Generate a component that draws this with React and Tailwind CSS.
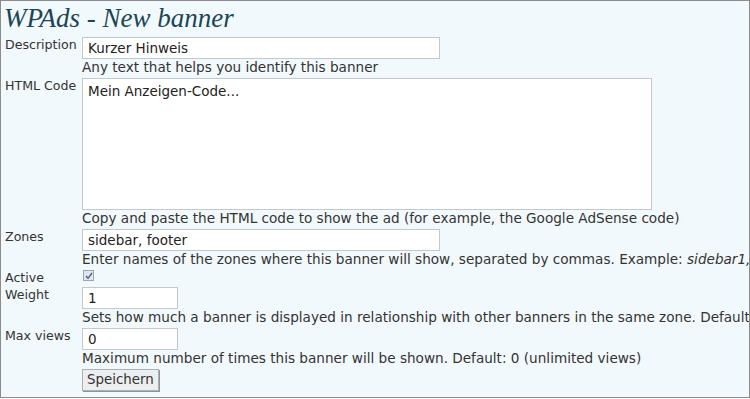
export default function App() {
  const input = 'h-[22px] border border-[#c4c8cb] bg-white px-[5px] text-[13.5px] text-[#222] outline-none'
  const label = 'pl-[4px] text-[12.6px] leading-[15px]'
  const help = 'leading-[17px] whitespace-nowrap'
  return (
    <div className="h-[398px] w-[750px] overflow-hidden border border-[#8c8c8c] bg-[#f2f9fc] font-['DejaVu_Sans',sans-serif] text-[13.6px] text-[#333]">
      <h1 className="pl-[3px] pt-[1px] font-['Liberation_Serif',serif] text-[27px] italic leading-[32px] text-[#1c4657]">
        WPAds - New banner
      </h1>
      <div className="mt-[3px] grid grid-cols-[81px_1fr] gap-y-[2px]">
        <div className={label}>Description</div>
        <div>
          <input className={`${input} w-[358px]`} defaultValue="Kurzer Hinweis" />
          <div className={help}>Any text that helps you identify this banner</div>
        </div>

        <div className={label}>HTML Code</div>
        <div>
          <textarea className="block h-[132px] w-[570px] resize-none border border-[#c4c8cb] bg-white px-[5px] py-[2px] text-[13.5px] text-[#222] outline-none" defaultValue="Mein Anzeigen-Code..." />
          <div className={help}>Copy and paste the HTML code to show the ad (for example, the Google AdSense code)</div>
        </div>

        <div className={label}>Zones</div>
        <div>
          <input className={`${input} w-[358px]`} defaultValue="sidebar, footer" />
          <div className={help}>
            Enter names of the zones where this banner will show, separated by commas. Example: <i>sidebar1,</i>
          </div>
        </div>

        <div className={label}>Active</div>
        <div className="flex h-[15px] items-start pl-[1px]">
          <span className="flex h-[11px] w-[11px] items-center justify-center border border-[#9aa6b0] bg-[#dfe6ee]">
            <svg width="8" height="8" viewBox="0 0 8 8">
              <path d="M1 4 L3 6.3 L7 1" fill="none" stroke="#4a5a70" strokeWidth="1.3" />
            </svg>
          </span>
        </div>

        <div className={label}>Weight</div>
        <div>
          <input className={`${input} w-[96px]`} defaultValue="1" />
          <div className={help}>Sets how much a banner is displayed in relationship with other banners in the same zone. Default</div>
        </div>

        <div className={label}>Max views</div>
        <div>
          <input className={`${input} w-[96px]`} defaultValue="0" />
          <div className={help}>Maximum number of times this banner will be shown. Default: 0 (unlimited views)</div>
        </div>

        <div />
        <div>
          <button className="h-[22px] border border-[#a9b0b6] bg-[#eceeef] px-[4px] text-[13.4px] leading-[18px] text-[#333] shadow-[1px_1px_0_#8d959b]">
            Speichern
          </button>
        </div>
      </div>
    </div>
  )
}
